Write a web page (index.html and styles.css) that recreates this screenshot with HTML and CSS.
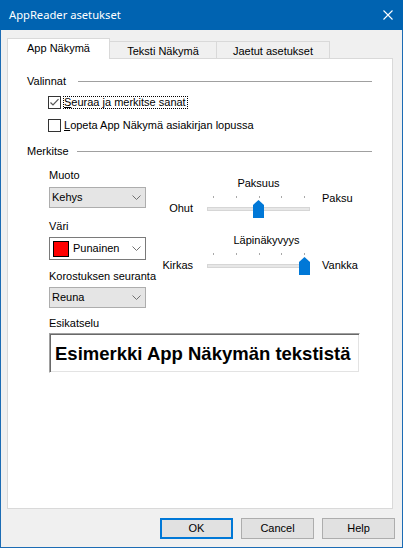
FILE: index.html
```html
<!DOCTYPE html>
<html lang="fi">
<head>
<meta charset="utf-8">
<title>AppReader asetukset</title>
<link rel="stylesheet" href="styles.css">
</head>
<body>
<div class="window">
  <div class="titlebar">
    <span class="title">AppReader asetukset</span>
    <svg class="close" width="10" height="10" viewBox="0 0 10 10"><path d="M0.5 0.5L9.5 9.5M9.5 0.5L0.5 9.5" stroke="#fff" stroke-width="1.1" fill="none"/></svg>
  </div>
  <div class="client">
    <div class="tabs">
      <div class="tab active">App Näkymä</div>
      <div class="tab t2">Teksti Näkymä</div>
      <div class="tab t3">Jaetut asetukset</div>
    </div>
    <div class="panel">
      <div class="group-head"><span>Valinnat</span><span class="rule r1"></span></div>
      <div class="checks">
        <div class="check">
          <svg class="box" width="13" height="13" viewBox="0 0 13 13"><rect x="0.5" y="0.5" width="12" height="12" fill="#fff" stroke="#333"/><path d="M2.5 6.5L5 9L10.5 3.2" stroke="#555" stroke-width="1.2" fill="none"/></svg>
          <span class="ctext focus"><u>S</u>euraa ja merkitse sanat</span>
        </div>
        <div class="check">
          <svg class="box" width="13" height="13" viewBox="0 0 13 13"><rect x="0.5" y="0.5" width="12" height="12" fill="#fff" stroke="#333"/></svg>
          <span class="ctext"><u>L</u>opeta App Näkymä asiakirjan lopussa</span>
        </div>
      </div>
      <div class="group-head g2"><span>Merkitse</span><span class="rule r2"></span></div>
      <div class="cols">
        <div class="left">
          <div class="lbl">Muoto</div>
          <div class="combo gray c1"><span>Kehys</span><svg class="chev" width="9" height="5" viewBox="0 0 9 5"><path d="M0.5 0.5L4.5 4.5L8.5 0.5" stroke="#707070" fill="none"/></svg></div>
          <div class="lbl l2">Väri</div>
          <div class="combo white c2"><span class="swatch"></span><span>Punainen</span><svg class="chev" width="9" height="5" viewBox="0 0 9 5"><path d="M0.5 0.5L4.5 4.5L8.5 0.5" stroke="#707070" fill="none"/></svg></div>
          <div class="lbl l3">Korostuksen seuranta</div>
          <div class="combo gray c3"><span>Reuna</span><svg class="chev" width="9" height="5" viewBox="0 0 9 5"><path d="M0.5 0.5L4.5 4.5L8.5 0.5" stroke="#707070" fill="none"/></svg></div>
        </div>
        <div class="right">
          <div class="slider">
            <div class="s-title">Paksuus</div>
            <div class="s-left">Ohut</div>
            <div class="s-area">
              <div class="ticks"><i></i><i></i><i></i><i></i><i></i></div>
              <div class="track"></div>
              <svg class="thumb th1" width="11" height="18" viewBox="0 0 11 18"><path d="M0 5L5.5 0L11 5V18H0Z" fill="#0078d7"/></svg>
            </div>
            <div class="s-right up">Paksu</div>
          </div>
          <div class="slider s2">
            <div class="s-title shift">Läpinäkyvyys</div>
            <div class="s-left">Kirkas</div>
            <div class="s-area">
              <div class="ticks"><i></i><i></i><i></i><i></i><i></i></div>
              <div class="track"></div>
              <svg class="thumb th2" width="11" height="18" viewBox="0 0 11 18"><path d="M0 5L5.5 0L11 5V18H0Z" fill="#0078d7"/></svg>
            </div>
            <div class="s-right">Vankka</div>
          </div>
        </div>
      </div>
      <div class="preview-block">
        <div class="lbl">Esikatselu</div>
        <div class="preview">Esimerkki App Näkymän tekstistä</div>
      </div>
    </div>
    <div class="buttons">
      <div class="btn default">OK</div>
      <div class="btn">Cancel</div>
      <div class="btn">Help</div>
    </div>
  </div>
</div>
</body>
</html>
```
FILE: styles.css
```css
* { box-sizing: border-box; }
html, body { margin: 0; padding: 0; }
body {
  width: 403px;
  height: 548px;
  font-family: "Liberation Sans", Arial, sans-serif;
  font-size: 11px;
  line-height: 13px;
  color: #000;
  background: #f0f0f0;
}
.window {
  width: 403px;
  height: 548px;
  border: 1px solid #1c6cb4;
  border-top: none;
  background: #f0f0f0;
  display: flex;
  flex-direction: column;
}
.titlebar {
  height: 30px;
  flex: none;
  background: #0063b1;
  color: #fff;
  display: flex;
  align-items: center;
  margin: 0 -1px;
  padding: 0 10px 0 9px;
}
.title {
  font-family: "Noto Sans", "Open Sans", sans-serif;
  font-size: 11.2px;
  line-height: 16px;
}
.close { margin-left: auto; }
.client {
  padding: 8px 6px 0 6px;
  display: flex;
  flex-direction: column;
}
.tabs {
  display: flex;
  align-items: flex-end;
  height: 21px;
  margin-bottom: -1px;
}
.tab {
  height: 18px;
  border: 1px solid #d9d9d9;
  border-bottom: none;
  background: #f0f0f0;
  display: flex;
  align-items: center;
  justify-content: center;
  padding-top: 1px;
}
.tab.active {
  height: 21px;
  width: 103px;
  background: #fff;
  position: relative;
  z-index: 1;
  padding-top: 0;
  padding-bottom: 1px;
}
.tab.t2 { width: 108px; margin-left: -1px; }
.tab.t3 { width: 114px; margin-left: -1px; }
.panel {
  width: 386px;
  height: 451px;
  background: #fff;
  border: 1px solid #d9d9d9;
  padding: 16px 20px 0 19px;
}
.group-head {
  display: flex;
  align-items: center;
  height: 13px;
}
.rule { flex: 1; height: 1px; background: #a0a0a0; }
.r1 { margin-left: 12px; }
.r2 { margin-left: 8px; }
.g2 { margin-top: 13px; }
.checks {
  margin-top: 8px;
  padding-left: 21px;
  display: flex;
  flex-direction: column;
  gap: 10px;
}
.check {
  display: flex;
  align-items: center;
  height: 13px;
}
.box { flex: none; margin-right: 2px; }
.ctext {
  border: 1px solid transparent;
  line-height: 11px;
  padding: 0 1px 0 0;
}
.ctext.focus { border: 1px dotted #000; }
.cols {
  display: flex;
  margin-top: 11px;
  padding-left: 22px;
}
.left { width: 97px; flex: none; }
.lbl { line-height: 13px; white-space: nowrap; }
.l2 { margin-top: 12px; }
.l3 { margin-top: 10px; }
.combo {
  display: flex;
  align-items: center;
  border: 1px solid #adadad;
  padding-left: 2px;
}
.combo.gray { background: #e5e5e5; height: 21px; }
.combo.white { background: #fff; height: 23px; border-color: #7a7a7a; }
.c1 { margin-top: 5px; }
.c2 { margin-top: 4px; }
.c3 { margin-top: 4px; }
.swatch {
  width: 16px;
  height: 16px;
  background: #ff0000;
  border: 1px solid #000;
  margin-left: 1px;
  margin-right: 4px;
}
.chev { margin-left: auto; margin-right: 4px; }
.right {
  flex: 1;
  padding-top: 8px;
  margin-left: 14px;
}
.slider {
  display: grid;
  grid-template-columns: 47px 103px auto;
  grid-template-rows: 13px 22px;
  row-gap: 6px;
}
.s2 { margin-top: 16px; }
.s-title {
  grid-column: 2;
  grid-row: 1;
  text-align: center;
  white-space: nowrap;
}
.s-title.shift { padding-left: 16px; }
.s-left {
  grid-column: 1;
  grid-row: 2;
  text-align: right;
  padding-right: 14px;
  padding-top: 6px;
}
.s-right {
  grid-column: 3;
  grid-row: 2;
  padding-left: 12px;
  padding-top: 6px;
}
.s-right.up { padding-top: 0; margin-top: -4px; }
.s-area {
  grid-column: 2;
  grid-row: 2;
  position: relative;
}
.ticks {
  display: flex;
  justify-content: space-between;
  height: 2px;
  padding: 0 5px 0 6px;
}
.ticks i { display: block; width: 1px; height: 2px; background: #a8a8a8; }
.track {
  margin-top: 9px;
  height: 4px;
  background: #e7e7e7;
  border: 1px solid #d6d6d6;
}
.thumb { position: absolute; top: 4px; }
.th1 { left: 46px; }
.th2 { left: 92px; }
.preview-block {
  margin-top: 9px;
  padding-left: 22px;
}
.preview {
  margin-top: 3px;
  width: 311px;
  height: 40px;
  border: 1px solid;
  border-color: #a0a0a0 #ffffff #ffffff #a0a0a0;
  box-shadow: inset 1px 1px 0 #696969, inset -1px -1px 0 #e3e3e3;
  display: flex;
  align-items: center;
  padding-left: 5px;
  font-weight: bold;
  font-size: 18.5px;
  white-space: nowrap;
  overflow: hidden;
}
.buttons {
  display: flex;
  justify-content: flex-end;
  gap: 8px;
  margin-top: 9px;
  padding-right: 1px;
}
.btn {
  width: 73px;
  height: 21px;
  background: #e1e1e1;
  border: 1px solid #adadad;
  display: flex;
  align-items: center;
  justify-content: center;
}
.btn.default {
  border-color: #0078d7;
  box-shadow: inset 0 0 0 1px #0078d7;
}
```
